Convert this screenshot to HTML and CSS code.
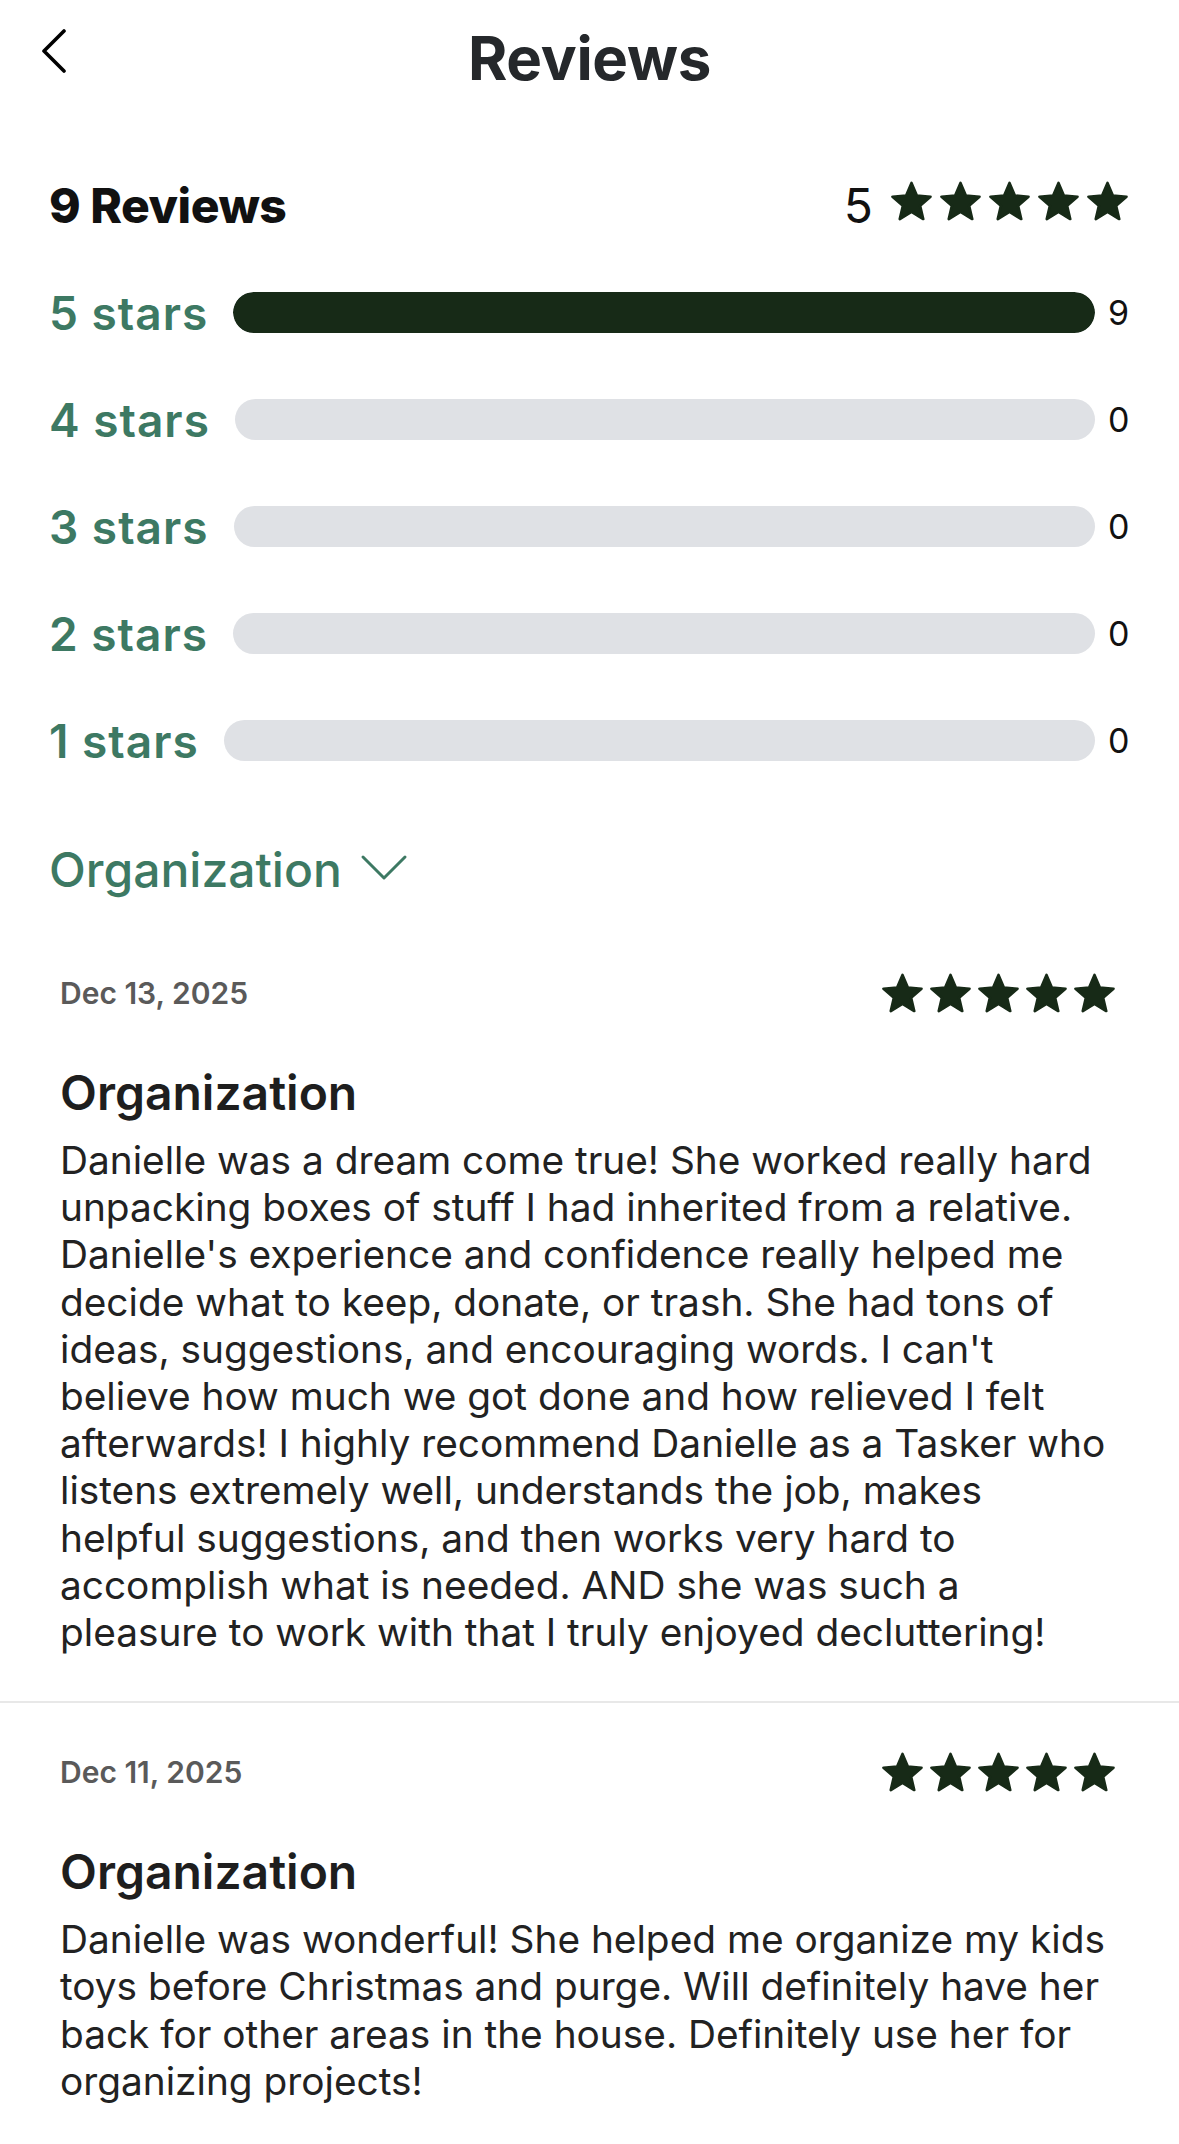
FILE: index.html
```html
<!DOCTYPE html>
<html lang="en">
<head>
    <meta charset="UTF-8">
    <meta name="viewport" content="width=device-width, initial-scale=1.0">
    <title>Reviews</title>
    <link rel="stylesheet" href="styles.css">
</head>
<body>

<svg width="0" height="0" class="defs">
    <symbol id="star" viewBox="1.2 1.2 21.6 20.6">
        <path d="M12 2l2.81 6.63L22 9.24l-5.46 4.73L18.18 21 12 17.27 5.82 21l1.64-7.03L2 9.24l7.19-.61z"
              fill="currentColor" stroke="currentColor" stroke-width="1.4" stroke-linejoin="round"/>
    </symbol>
</svg>

<div class="topbar">
    <button class="back-btn" aria-label="Back">
        <svg width="26" height="44" viewBox="0 0 26 44">
            <polyline points="23,2 3,22 23,42" fill="none" stroke="#000" stroke-width="3.6" stroke-linecap="round" stroke-linejoin="round"/>
        </svg>
    </button>
    <h1>Reviews</h1>
    <span></span>
</div>

<div class="summary">
    <div class="summary-row">
        <h2>9 Reviews</h2>
        <div class="avg">
            <span class="avg-num">5</span>
            <div class="stars big">
                <svg><use href="#star"/></svg>
                <svg><use href="#star"/></svg>
                <svg><use href="#star"/></svg>
                <svg><use href="#star"/></svg>
                <svg><use href="#star"/></svg>
            </div>
        </div>
    </div>

    <div class="bars">
        <div class="bar-row">
            <span class="bar-label">5 stars</span>
            <div class="bar"><div class="bar-fill" style="width: 100%;"></div></div>
            <span class="bar-count">9</span>
        </div>
        <div class="bar-row">
            <span class="bar-label">4 stars</span>
            <div class="bar"><div class="bar-fill" style="width: 0%;"></div></div>
            <span class="bar-count">0</span>
        </div>
        <div class="bar-row">
            <span class="bar-label">3 stars</span>
            <div class="bar"><div class="bar-fill" style="width: 0%;"></div></div>
            <span class="bar-count">0</span>
        </div>
        <div class="bar-row">
            <span class="bar-label">2 stars</span>
            <div class="bar"><div class="bar-fill" style="width: 0%;"></div></div>
            <span class="bar-count">0</span>
        </div>
        <div class="bar-row">
            <span class="bar-label">1 stars</span>
            <div class="bar"><div class="bar-fill" style="width: 0%;"></div></div>
            <span class="bar-count">0</span>
        </div>
    </div>

    <button class="filter">
        Organization
        <svg width="48" height="28" viewBox="0 0 48 28">
            <polyline points="3,3 24,24 45,3" fill="none" stroke="currentColor" stroke-width="3" stroke-linecap="round" stroke-linejoin="round"/>
        </svg>
    </button>
</div>

<div class="review">
    <div class="review-head">
        <span class="review-date">Dec 13, 2025</span>
        <div class="stars">
            <svg><use href="#star"/></svg>
            <svg><use href="#star"/></svg>
            <svg><use href="#star"/></svg>
            <svg><use href="#star"/></svg>
            <svg><use href="#star"/></svg>
        </div>
    </div>
    <h3>Organization</h3>
    <p>Danielle was a dream come true! She worked really hard unpacking boxes of stuff I had inherited from a relative. Danielle's experience and confidence really helped me decide what to keep, donate, or trash. She had tons of ideas, suggestions, and encouraging words. I can't believe how much we got done and how relieved I felt afterwards! I highly recommend Danielle as a Tasker who listens extremely well, understands the job, makes helpful suggestions, and then works very hard to accomplish what is needed. AND she was such a pleasure to work with that I truly enjoyed decluttering!</p>
</div>

<div class="review">
    <div class="review-head">
        <span class="review-date">Dec 11, 2025</span>
        <div class="stars">
            <svg><use href="#star"/></svg>
            <svg><use href="#star"/></svg>
            <svg><use href="#star"/></svg>
            <svg><use href="#star"/></svg>
            <svg><use href="#star"/></svg>
        </div>
    </div>
    <h3>Organization</h3>
    <p>Danielle was wonderful! She helped me organize my kids toys before Christmas and purge. Will definitely have her back for other areas in the house. Definitely use her for organizing projects!</p>
</div>

</body>
</html>
```

FILE: styles.css
```css
body {
    font-family: Inter, "Noto Sans", sans-serif;
    background: #fff;
    color: #222;
    margin: 0;
}

.defs {
    position: absolute;
}

button {
    font-family: inherit;
    background: none;
    border: none;
    padding: 0;
    cursor: pointer;
}

/* top bar */
.topbar {
    display: grid;
    grid-template-columns: 1fr auto 1fr;
    padding: 22px 41px 0;
}

.back-btn {
    justify-self: start;
    align-self: start;
    margin-top: 7px;
    display: flex;
}

.topbar h1 {
    margin: 0;
    font-size: 60px;
    line-height: 72px;
    font-weight: 700;
    color: #25282b;
    letter-spacing: -0.3px;
}

/* rating summary */
.summary {
    padding: 82px 51px 0 49px;
}

.summary-row {
    display: flex;
    align-items: center;
    justify-content: space-between;
    height: 58px;
}

.summary-row h2 {
    margin: 0;
    font-size: 48px;
    font-weight: 800;
    color: #111;
    letter-spacing: -0.5px;
}

.avg {
    display: flex;
    align-items: center;
    gap: 18px;
}

.avg-num {
    font-size: 48px;
    color: #111;
}

.stars {
    display: flex;
    gap: 7px;
    color: #172a17;
}

.stars svg {
    width: 41px;
    height: 40px;
}

.stars.big {
    gap: 8px;
    margin-bottom: 8px;
}

.stars.big svg {
    width: 41px;
    height: 42px;
}

/* breakdown bars */
.bars {
    display: flex;
    flex-direction: column;
    gap: 66px;
    margin-top: 58px;
}

.bar-row {
    display: flex;
    align-items: center;
    height: 41px;
}

.bar-label {
    font-size: 46px;
    font-weight: 600;
    letter-spacing: 1px;
    color: #3d7963;
    margin-right: 25px;
    white-space: nowrap;
}

.bar {
    flex: 1;
    height: 41px;
    border-radius: 21px;
    background: #dfe1e5;
    overflow: hidden;
}

.bar-fill {
    height: 100%;
    background: #172a17;
    border-radius: 21px;
}

.bar-count {
    width: 20px;
    margin-left: 13px;
    font-size: 34px;
    color: #111;
}

.filter {
    display: flex;
    align-items: center;
    gap: 18px;
    margin-top: 80px;
    font-size: 48px;
    line-height: 58px;
    font-weight: 500;
    color: #3d7963;
}

.filter svg {
    margin-top: -4px;
}

/* review cards */
.review {
    padding: 49px 64px 46px 60px;
    border-bottom: 2px solid #e8e8e8;
}

.summary + .review {
    padding-top: 74px;
}

.review:last-child {
    border-bottom: none;
}

.review-head {
    display: flex;
    align-items: center;
    justify-content: space-between;
    height: 40px;
}

.review-date {
    font-size: 30px;
    font-weight: 600;
    color: #5a5a5a;
}

.review h3 {
    margin: 51px 0 0;
    font-size: 48px;
    line-height: 58px;
    font-weight: 600;
    color: #1e1e1e;
}

.review p {
    margin: 14px 2px 0 0;
    font-size: 38.8px;
    line-height: 47.2px;
    color: #222;
}
```
